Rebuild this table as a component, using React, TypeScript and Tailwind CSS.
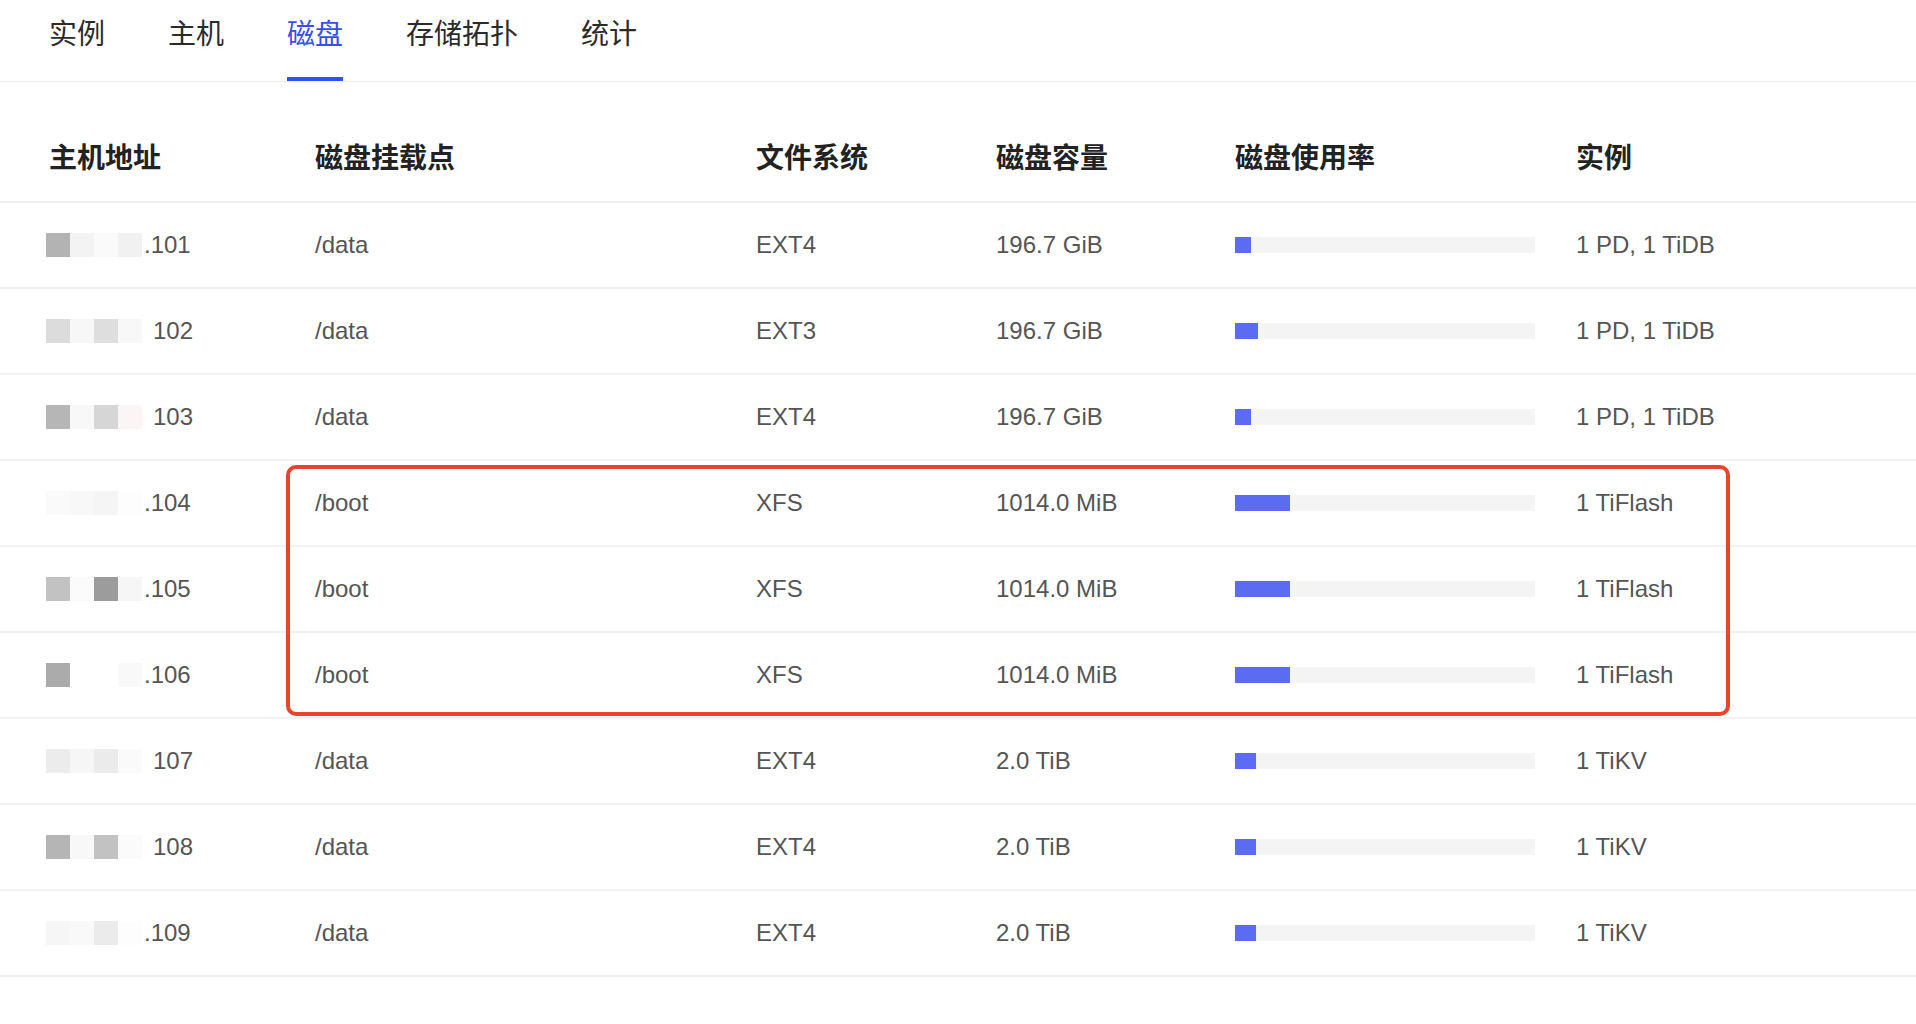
import React from 'react';

// ── Data ──────────────────────────────────────────────────────────────────────

type DiskRow = {
  mosaic: string[];
  suffix: string;
  gap: number;
  mount: string;
  fs: string;
  size: string;
  usage: number; // fill width in px (track = 300px)
  instances: string;
};

const ROWS: DiskRow[] = [
  { mosaic: ['#b3b3b3', '#f3f3f3', '#fafafa', '#f1f1f1'], suffix: '.101', gap: 2, mount: '/data', fs: 'EXT4', size: '196.7 GiB', usage: 16, instances: '1 PD, 1 TiDB' },
  { mosaic: ['#dcdcdc', '#f7f7f7', '#dedede', '#f8f8f8'], suffix: '102', gap: 11, mount: '/data', fs: 'EXT3', size: '196.7 GiB', usage: 23, instances: '1 PD, 1 TiDB' },
  { mosaic: ['#b6b6b6', '#f8f8f8', '#d6d6d6', '#fbf5f5'], suffix: '103', gap: 11, mount: '/data', fs: 'EXT4', size: '196.7 GiB', usage: 16, instances: '1 PD, 1 TiDB' },
  { mosaic: ['#fafafa', '#f8f8f8', '#f5f5f5', '#fdfdfd'], suffix: '.104', gap: 2, mount: '/boot', fs: 'XFS', size: '1014.0 MiB', usage: 55, instances: '1 TiFlash' },
  { mosaic: ['#c2c2c2', '#fbfbfb', '#9c9c9c', '#f6f6f6'], suffix: '.105', gap: 2, mount: '/boot', fs: 'XFS', size: '1014.0 MiB', usage: 55, instances: '1 TiFlash' },
  { mosaic: ['#ababab', '#ffffff', '#ffffff', '#f9f9f9'], suffix: '.106', gap: 2, mount: '/boot', fs: 'XFS', size: '1014.0 MiB', usage: 55, instances: '1 TiFlash' },
  { mosaic: ['#ececec', '#f6f6f6', '#ebebeb', '#fafafa'], suffix: '107', gap: 11, mount: '/data', fs: 'EXT4', size: '2.0 TiB', usage: 21, instances: '1 TiKV' },
  { mosaic: ['#b5b5b5', '#f8f8f8', '#c2c2c2', '#fbfbfb'], suffix: '108', gap: 11, mount: '/data', fs: 'EXT4', size: '2.0 TiB', usage: 21, instances: '1 TiKV' },
  { mosaic: ['#f6f6f6', '#f9f9f9', '#ebebeb', '#fdfdfd'], suffix: '.109', gap: 2, mount: '/data', fs: 'EXT4', size: '2.0 TiB', usage: 21, instances: '1 TiKV' },
];

const TABS = ['实例', '主机', '磁盘', '存储拓扑', '统计'];
const ACTIVE_TAB = '磁盘';

const HEADERS = ['主机地址', '磁盘挂载点', '文件系统', '磁盘容量', '磁盘使用率', '实例'];

const GRID = 'grid grid-cols-[315px_441px_240px_239px_341px_1fr] items-center';

// ── Component ─────────────────────────────────────────────────────────────────

export default function App() {
  return (
    <div className="relative min-h-screen w-full bg-white font-['Liberation_Sans','Noto_Sans_CJK_SC',sans-serif]">
      {/* ── Tabs ─────────────────────────────────────────────────────────── */}
      <div className="flex h-[82px] gap-[63px] border-b border-[#eeeeee] pl-[49px]">
        {TABS.map((t) => (
          <div
            key={t}
            className={`flex h-full items-start border-b-[4px] pt-[12px] font-['Noto_Sans_CJK_SC',sans-serif] text-[28px] leading-[40px] ${
              t === ACTIVE_TAB ? 'border-[#3550e6] text-[#3550e6]' : 'border-transparent text-[#2b2b2b]'
            }`}
          >
            {t}
          </div>
        ))}
      </div>

      {/* ── Table ────────────────────────────────────────────────────────── */}
      <div className="mt-[35px]">
        <div className={`${GRID} h-[86px] border-b-2 border-[#eeeeee] pb-[7px]`}>
          {HEADERS.map((h, i) => (
            <div
              key={h}
              className={`font-['Noto_Sans_CJK_SC',sans-serif] text-[28px] font-bold text-[#222222] ${i === 0 ? 'pl-[49px]' : ''}`}
            >
              {h}
            </div>
          ))}
        </div>

        {ROWS.map((r, idx) => (
          <div key={idx} className={`${GRID} h-[86px] border-b-2 border-[#f2f2f2] text-[24px] text-[#555555]`}>
            <div className="flex items-center pl-[46px]">
              <div className="flex">
                {r.mosaic.map((c, j) => (
                  <span key={j} className="block h-[24px] w-[24px]" style={{ backgroundColor: c }} />
                ))}
              </div>
              <span style={{ marginLeft: r.gap }}>{r.suffix}</span>
            </div>
            <div>{r.mount}</div>
            <div>{r.fs}</div>
            <div>{r.size}</div>
            <div>
              <div className="h-[16px] w-[300px] bg-[#f4f4f4]">
                <div className="h-full bg-[#5b6cf2]" style={{ width: r.usage }} />
              </div>
            </div>
            <div>{r.instances}</div>
          </div>
        ))}
      </div>

      {/* ── Annotation box ───────────────────────────────────────────────── */}
      <div className="pointer-events-none absolute left-[286px] top-[465px] h-[251px] w-[1444px] rounded-[10px] border-[4px] border-[#e6452e]" />
    </div>
  );
}
